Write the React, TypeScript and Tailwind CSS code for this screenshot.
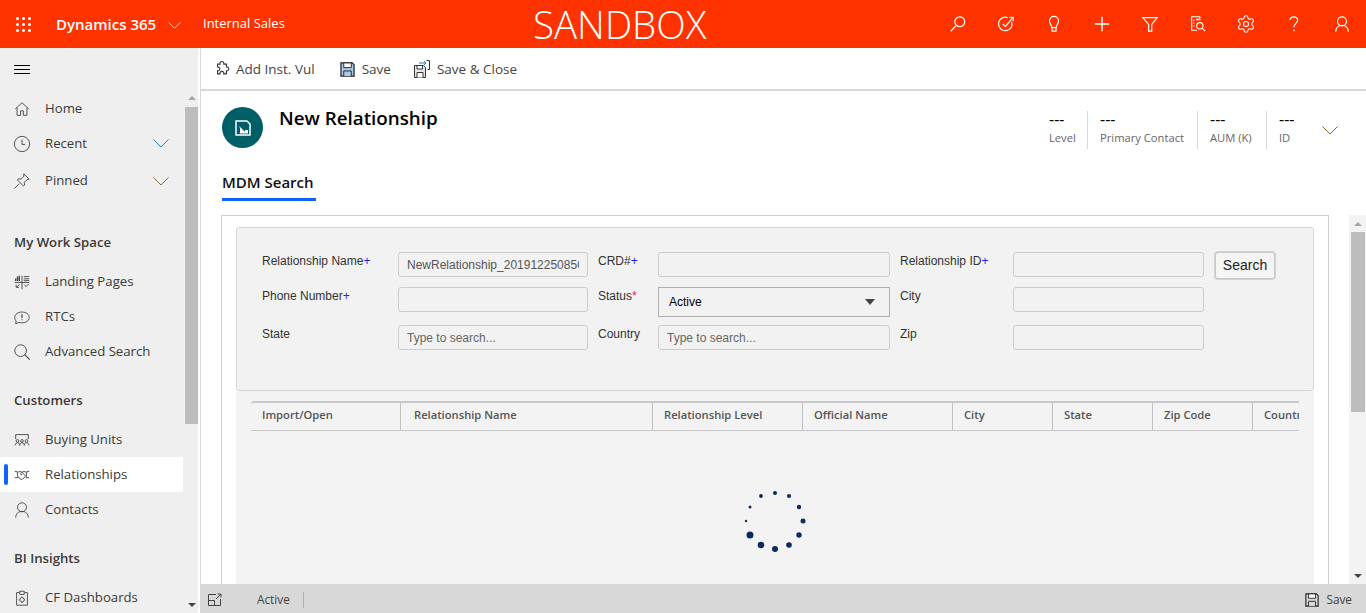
import React from 'react';
import { Settings } from 'lucide-react';

type IconProps = { className?: string };

const Svg = ({ className, children }: IconProps & { children: React.ReactNode }) => (
  <svg viewBox="0 0 20 20" fill="none" stroke="currentColor" strokeWidth="1" className={className}>
    {children}
  </svg>
);

const SearchGlyph = ({ className }: IconProps) => (
  <Svg className={className}><circle cx="12" cy="7.5" r="5.5" strokeWidth="1.3" /><path d="M8 11.5 2 18" strokeWidth="1.4" /></Svg>
);
const TaskGlyph = ({ className }: IconProps) => (
  <Svg className={className}>
    <path d="M16.3 7.5A7.5 7.5 0 1 1 12 3" strokeWidth="1.3" /><path d="m6.5 10 2.8 2.8L17.5 3" strokeWidth="1.3" /><path d="M13.5 2.5h4.5V7" strokeWidth="1.2" />
  </Svg>
);
const BulbGlyph = ({ className }: IconProps) => (
  <Svg className={className}>
    <path d="M7.5 14c0-3-2.500-4-2.500-7.500a5 5 0 0 1 10 0C15 10 12.500 11 12.500 14z" strokeWidth="1.3" /><path d="M7.800 14v4h4.400v-4" strokeWidth="1.3" />
  </Svg>
);
const PlusGlyph = ({ className }: IconProps) => (
  <Svg className={className}><path d="M10 2v16M2 10h16" strokeWidth="1.6" /></Svg>
);
const FilterGlyph = ({ className }: IconProps) => (
  <Svg className={className}><path d="M2 3h16l-6 7.500V18H8.500v-7.500z" strokeWidth="1.3" /></Svg>
);
const DocSearchGlyph = ({ className }: IconProps) => (
  <Svg className={className}>
    <path d="M9 17H3V2h9v4" strokeWidth="1.2" /><path d="M5 6h1M5 9h1M5 12h1M8 5h3" strokeWidth="1.5" /><circle cx="12" cy="12" r="3.500" strokeWidth="1.2" /><path d="m14.500 14.500 3.500 3.500" strokeWidth="1.3" />
  </Svg>
);
const HelpGlyph = ({ className }: IconProps) => (
  <Svg className={className}>
    <path d="M5.500 5.500C5.800 3.200 7.500 2 9.700 2c2.500 0 4.300 1.600 4.300 3.800 0 3.500-4 3.700-4 7.700" strokeWidth="1.3" /><path d="M10 16.500v1.500" strokeWidth="1.5" />
  </Svg>
);
const PersonGlyph = ({ className }: IconProps) => (
  <Svg className={className}>
    <circle cx="10" cy="7" r="5" strokeWidth="1.3" /><path d="M3 18.500c0-4 2.800-7 7-7s7 3 7 7" strokeWidth="1.3" />
  </Svg>
);
const Chevron = ({ className }: IconProps) => (
  <svg viewBox="0 0 16 9" fill="none" stroke="currentColor" strokeWidth="1" className={className}><path d="m.5.5 7.500 7.500L15.500.5" /></svg>
);
const HomeGlyph = ({ className }: IconProps) => (
  <Svg className={className}><path d="M2.500 10 10 3l7.500 7M4.500 8.500V17h4v-5h3v5h4V8.500" strokeWidth="1" /></Svg>
);
const ClockGlyph = ({ className }: IconProps) => (
  <Svg className={className}><circle cx="10" cy="10" r="8.500" /><path d="M10 5v5.500h3.500" /></Svg>
);
const PinGlyph = ({ className }: IconProps) => (
  <Svg className={className}><path d="m12 2 6 6-2.500.5-3 3 .5 3-1.500 1-6.500-6.500 1-1.500 3 .5 3-3zM7 13l-5.500 5.500" /></Svg>
);
const LandingGlyph = ({ className }: IconProps) => (
  <Svg className={className}>
    <path d="M2 10.500h16M10 3v15M12 4h6M12 6.500h6M12 8.500h6" /><path d="M3 9V6M5 9V4M7 9V3" strokeWidth="1.500" /><path d="m12.500 13 2 2 3-3M7 12.500l-2.500 3M3.500 13v3h3" />
  </Svg>
);
const RtcGlyph = ({ className }: IconProps) => (
  <Svg className={className}>
    <path d="M3.500 14.500C2.300 13.300 2 12 2 10.500 2 7 5.500 4.500 10 4.500s8 2.500 8 6-3.500 6-8 6c-1.200 0-2.300-.2-3.300-.5L3 17.500z" /><path d="M10 7v4M10 12.500v1.200" strokeWidth="1.300" />
  </Svg>
);
const MagnifyGlyph = ({ className }: IconProps) => (
  <Svg className={className}><circle cx="8.500" cy="8.500" r="6.500" /><path d="m13 13 5.500 5.500" strokeWidth="1.200" /></Svg>
);
const BuyingGlyph = ({ className }: IconProps) => (
  <Svg className={className}>
    <path d="M3 9V4h14v5" /><circle cx="5" cy="11" r="1.500" /><circle cx="10" cy="11" r="1.500" /><circle cx="15" cy="11" r="1.500" /><path d="M2.500 16c0-2 1-3 2.500-3s2.500 1 2.500 3M7.500 16c0-2 1-3 2.500-3s2.500 1 2.500 3M12.500 16c0-2 1-3 2.500-3s2.500 1 2.500 3" />
  </Svg>
);
const HandshakeGlyph = ({ className }: IconProps) => (
  <Svg className={className}>
    <path d="M2 6h2.500l1 7H2M18 6h-2.500l-1 7H18M5 7l3-1 2 1 2-1 3 1M5.500 12l3.500 3 1.500-.5 3-2.500M8 8.500l2.500-1.500 3.500 4.500M8 8.500l2 1.500" />
  </Svg>
);
const ContactGlyph = ({ className }: IconProps) => (
  <Svg className={className}><circle cx="10" cy="7" r="5" /><path d="M3 18.500c0-4 2.800-7 7-7s7 3 7 7" /></Svg>
);
const ClipGlyph = ({ className }: IconProps) => (
  <Svg className={className}>
    <path d="M7 4H4v14h12V4h-3M7.500 2.500h5V6h-5z" /><circle cx="10" cy="12" r="2.500" /><path d="M10 8.500v1M10 14.500v1M6.500 12h1M12.500 12h1" />
  </Svg>
);
const PuzzleGlyph = ({ className }: IconProps) => (
  <svg viewBox="0 0 18 18" fill="none" stroke="#333" strokeWidth="1.200" className={className}>
    <path d="M4 3.500h2.800a2.200 2.200 0 1 1 4.200 0h3v3.200a2.200 2.200 0 1 1 0 4.300v3.500h-3a2.200 2.200 0 1 0-4.200 0H4V11a2.200 2.200 0 1 0 0-4.300z" />
  </svg>
);
const FloppyGlyph = ({ className, fill = '#a9cbe8' }: IconProps & { fill?: string }) => (
  <svg viewBox="0 0 16 16" className={className}>
    <path d="M1 1h12l2 2v12H1z" fill={fill} stroke="#222" strokeWidth="1.300" />
    <path d="M4 1h8v5H4z" fill="#fff" stroke="#222" />
    <path d="M4 15V9.500h8V15" fill={fill} stroke="#222" />
  </svg>
);
const SaveCloseGlyph = ({ className }: IconProps) => (
  <svg viewBox="0 0 17 18" fill="none" className={className}>
    <path d="M1.500 5.500h9l2 2v10h-11z" fill="#e8e8e8" stroke="#333" />
    <path d="M4 5.500h5.500V9H4zM4 17.500v-5h6v5" fill="#fff" stroke="#333" />
    <path d="M6 3h7M11 1l2 2-2 2" stroke="#2a78c6" />
    <path d="M13.500.5h3v9h-2" stroke="#333" />
  </svg>
);
const PopoutGlyph = ({ className }: IconProps) => (
  <svg viewBox="0 0 14 13" fill="none" stroke="#444" className={className}>
    <path d="M8 1.500H.5v11h12V6M.5 7.500h6v5M8 6l4.500-4.500M9.500 1h3.500v3.500" />
  </svg>
);

const Waffle = () => (
  <div className="grid grid-cols-3 gap-[3px] w-[15px]">
    {Array.from({ length: 9 }).map((_, i) => (
      <span key={i} className="w-[3px] h-[3px] rounded-full bg-white" />
    ))}
  </div>
);

const TopBar = () => {
  const icons = [SearchGlyph, TaskGlyph, BulbGlyph, PlusGlyph, FilterGlyph, DocSearchGlyph, null, HelpGlyph, PersonGlyph];
  return (
    <div className="h-12 bg-[#ff3300] text-white flex items-center shrink-0">
      <div className="w-[56px] pl-4"><Waffle /></div>
      <span className="text-[15px] font-semibold w-[112px]">Dynamics 365</span>
      <Chevron className="w-[13px] h-[7px] mt-[2px] text-white" />
      <span className="ml-[22px] text-[13px] w-[330px]">Internal Sales</span>
      <span className="text-[38.5px] leading-[48px] font-light">SANDBOX</span>
      <div className="ml-auto flex">
        {icons.map((Icon, i) => (
          <div key={i} className="w-12 h-12 flex items-center justify-center">
            {Icon ? <Icon className="w-[18px] h-[18px]" /> : <Settings className="w-5 h-5" strokeWidth={1.3} />}
          </div>
        ))}
      </div>
    </div>
  );
};

const NavRow = ({ icon: Icon, label, active, chevron, className }: {
  icon: React.ComponentType<IconProps>;
  label: string;
  active?: boolean;
  chevron?: string;
  className?: string;
}) => (
  <div className={`relative h-[35px] flex items-center pl-[13px] text-[13.2px] text-[#3b3a39] ${active ? 'bg-white' : ''} ${className ?? ''}`}>
    {active && <span className="absolute left-1 top-[7px] w-1 h-[21px] rounded-full bg-[#0f62fe]" />}
    <Icon className="w-[18px] h-[18px] mr-[14px] text-[#444]" />
    <span>{label}</span>
    {chevron && <Chevron className={`w-4 h-[9px] ml-auto mr-[14px] ${chevron}`} />}
  </div>
);

const NavHeading = ({ label, className }: { label: string; className: string }) => (
  <div className={`h-[35px] flex items-center pl-[14px] text-[13.2px] font-semibold text-[#3b3a39] ${className}`}>{label}</div>
);

const Sidebar = () => (
  <div className="w-[200px] shrink-0 flex bg-white">
    <div className="w-[183px] bg-[#efefef] overflow-hidden">
      <div className="h-[42px] flex items-center pl-[14px]">
        <div className="w-4 flex flex-col gap-[3px]">
          <span className="h-px bg-black" /><span className="h-px bg-black" /><span className="h-px bg-black" />
        </div>
      </div>
      <NavRow icon={HomeGlyph} label="Home" className="h-[36px] pt-[1px]" />
      <NavRow icon={ClockGlyph} label="Recent" chevron="text-[#3b7fc4]" />
      <NavRow icon={PinGlyph} label="Pinned" chevron="text-[#8a6f3a]" className="h-[38px] pt-[2px]" />
      <NavHeading label="My Work Space" className="mt-[26px]" />
      <NavRow icon={LandingGlyph} label="Landing Pages" className="mt-1" />
      <NavRow icon={RtcGlyph} label="RTCs" />
      <NavRow icon={MagnifyGlyph} label="Advanced Search" />
      <NavHeading label="Customers" className="mt-[14px]" />
      <NavRow icon={BuyingGlyph} label="Buying Units" className="mt-1" />
      <NavRow icon={HandshakeGlyph} label="Relationships" active />
      <NavRow icon={ContactGlyph} label="Contacts" />
      <NavHeading label="BI Insights" className="mt-[14px]" />
      <NavRow icon={ClipGlyph} label="CF Dashboards" className="mt-1" />
    </div>
    <div className="w-[15px] bg-[#efefef] flex flex-col items-end">
      <div className="w-[13px] h-[59px] pt-[48px]"><div className="mx-auto w-0 h-0 border-x-[4px] border-x-transparent border-b-[4px] border-b-[#a6a6a6]" /></div>
      <div className="w-[13px] h-[317px] bg-[#bdbdbd]" />
      <div className="w-[13px] mt-auto mb-[6px] flex justify-center"><div className="w-0 h-0 border-x-[4px] border-x-transparent border-t-[4px] border-t-[#444]" /></div>
    </div>
  </div>
);

const Toolbar = () => (
  <div className="h-[41px] flex items-center pl-[13px] pt-[1px] text-[13.5px] text-[#444] shrink-0">
    <PuzzleGlyph className="w-[16px] h-[16px] mr-[6px]" />
    <span>Add Inst. Vul</span>
    <FloppyGlyph className="w-[15px] h-[15px] ml-[25px] mr-[7px]" />
    <span>Save</span>
    <SaveCloseGlyph className="w-[17px] h-[18px] ml-[22px] mr-[7px]" />
    <span>Save &amp; Close</span>
  </div>
);

const Stat = ({ label, width, divider }: { label: string; width: string; divider?: boolean }) => (
  <div className={`${width} h-[38px] pl-3 ${divider ? 'border-r border-[#d8d8d8]' : ''}`}>
    <div className="text-[16px] leading-[16px] text-black h-[18px]">---</div>
    <div className="text-[11.2px] leading-[18px] text-[#666]">{label}</div>
  </div>
);

const RecordHeader = () => (
  <div className="h-[126px] pl-[21px] pr-[28px] shrink-0 border-t-2 border-[#d8d8d8]">
    <div className="flex pt-4">
      <div className="w-[41px] h-[41px] rounded-full bg-[#005e66] flex items-center justify-center">
        <svg viewBox="0 0 16 16" fill="none" className="w-[16px] h-[16px]">
          <path d="M1 1h11l3 3v11H1z" stroke="#fff" strokeWidth="1.500" />
          <path d="M3.500 4.500 9 10h4v3.500H5V8" fill="#fff" />
          <path d="M3.500 4.500 10 11" stroke="#005e66" strokeWidth="1.200" />
        </svg>
      </div>
      <h1 className="ml-[16px] text-[18.8px] leading-[23px] font-semibold text-black">New Relationship</h1>
      <div className="ml-auto flex items-start pt-[4px]">
        <Stat label="Level" width="w-[51px]" divider />
        <Stat label="Primary Contact" width="w-[110px]" divider />
        <Stat label="AUM (K)" width="w-[69px]" divider />
        <Stat label="ID" width="w-[55px]" />
        <Chevron className="w-4 h-[9px] mt-[15px] text-[#8a6a20]" />
      </div>
    </div>
    <div className="mt-[23px] inline-flex flex-col">
      <span className="text-[15px] leading-[20px] font-semibold text-[#111]">MDM Search</span>
      <span className="mt-[6px] h-[3px] w-[94px] bg-[#0f62fe]" />
    </div>
  </div>
);

const Label = ({ text, mark }: { text: string; mark?: '+' | '*' }) => (
  <span className="text-[12px] leading-[18px] text-[#333] font-['Liberation_Sans',Arial,sans-serif]">
    {text}
    {mark === '+' && <span className="text-[#2222ee]">+</span>}
    {mark === '*' && <span className="text-[#e0245e]">*</span>}
  </span>
);

const Field = ({ value, placeholder, width }: { value?: string; placeholder?: string; width: string }) => (
  <input
    readOnly
    value={value ?? ''}
    placeholder={placeholder}
    className={`${width} h-[25px] px-2 border border-[#cccccc] rounded-[3px] bg-[#f2f2f2] text-[12px] text-[#555] placeholder:text-[#666] outline-none font-['Liberation_Sans',Arial,sans-serif]`}
  />
);

const SearchForm = () => (
  <div className="h-[164px] mx-[14px] mt-[11px] bg-[#f2f2f2] border border-[#d6d6d6] rounded-[3px] pl-[25px] pt-[24px]">
    <div className="flex items-start h-[35px]">
      <div className="w-[136px] -mt-[5px]"><Label text="Relationship Name" mark="+" /></div>
      <Field value="NewRelationship_20191225085012" width="w-[190px]" />
      <div className="w-[60px] ml-[10px] -mt-[5px]"><Label text="CRD#" mark="+" /></div>
      <Field width="w-[232px]" />
      <div className="w-[113px] ml-[10px] -mt-[5px]"><Label text="Relationship ID" mark="+" /></div>
      <Field width="w-[191px]" />
      <button className="ml-[11px] w-[60px] h-[27px] bg-[#f5f5f5] border border-[#c8c8c8] ring-1 ring-[#d4d4d4] rounded-[3px] text-[14px] text-[#222] font-['Liberation_Sans',Arial,sans-serif]">Search</button>
    </div>
    <div className="flex items-start h-[38px]">
      <div className="w-[136px] -mt-[5px]"><Label text="Phone Number" mark="+" /></div>
      <Field width="w-[190px]" />
      <div className="w-[60px] ml-[10px] -mt-[5px]"><Label text="Status" mark="*" /></div>
      <div className="w-[232px] h-[30px] pl-[10px] pr-[14px] flex items-center justify-between border border-[#b0b0b0] bg-[#f2f2f2] text-[12px] text-black font-['Liberation_Sans',Arial,sans-serif]">
        <span>Active</span>
        <span className="w-0 h-0 border-x-[5px] border-x-transparent border-t-[6px] border-t-[#444]" />
      </div>
      <div className="w-[113px] ml-[10px] -mt-[5px]"><Label text="City" /></div>
      <Field width="w-[191px]" />
    </div>
    <div className="flex items-start h-[35px]">
      <div className="w-[136px] -mt-[5px]"><Label text="State" /></div>
      <Field placeholder="Type to search..." width="w-[190px]" />
      <div className="w-[60px] ml-[10px] -mt-[5px]"><Label text="Country" /></div>
      <Field placeholder="Type to search..." width="w-[232px]" />
      <div className="w-[113px] ml-[10px] -mt-[5px]"><Label text="Zip" /></div>
      <Field width="w-[191px]" />
    </div>
  </div>
);

const columns = [
  { label: 'Import/Open', w: 'w-[150px]', pad: 'pl-[11px]' },
  { label: 'Relationship Name', w: 'w-[252px]', pad: 'pl-[13px]' },
  { label: 'Relationship Level', w: 'w-[150px]', pad: 'pl-[11px]' },
  { label: 'Official Name', w: 'w-[150px]', pad: 'pl-[11px]' },
  { label: 'City', w: 'w-[100px]', pad: 'pl-[11px]' },
  { label: 'State', w: 'w-[100px]', pad: 'pl-[11px]' },
  { label: 'Zip Code', w: 'w-[100px]', pad: 'pl-[11px]' },
  { label: 'Country', w: 'w-[100px]', pad: 'pl-[11px]' },
];

const spinnerDots = [
  [75, 23, 2], [89, 26, 2.1], [99, 37, 2.2], [103, 51, 2.500], [99, 65, 2.700], [89, 75, 2.800],
  [75, 79, 3], [61, 75, 3.300], [50, 65, 3.500], [46, 51, 1.200], [50, 37, 1.500], [61, 26, 1.900],
];

const Spinner = () => (
  <svg viewBox="0 0 150 100" className="w-[150px] h-[100px]">
    {spinnerDots.map(([cx, cy, r], i) => (
      <circle key={i} cx={cx} cy={cy} r={r} fill="#0b2a5e" />
    ))}
  </svg>
);

const Grid = () => (
  <div className="flex-1 bg-[#f3f3f3] mx-[14px] px-[15px] pt-[10px] overflow-hidden">
    <div className="w-[1048px] overflow-hidden h-[30px] flex border-t-2 border-b border-[#c8c8c8] rounded-tl-[3px] text-[11.2px] font-semibold text-[#555]">
      {columns.map((c, i) => (
        <div key={c.label} className={`${c.w} ${c.pad} shrink-0 flex items-center pb-[2px] whitespace-nowrap ${i < columns.length - 1 ? 'border-r border-[#c0c0c0]' : ''}`}>
          {c.label}
        </div>
      ))}
    </div>
    <div className="flex justify-center pt-[39px]">
      <Spinner />
    </div>
  </div>
);

const Scrollbar = () => (
  <div className="w-[17px] shrink-0 bg-[#f3f3f3] flex flex-col items-center">
    <div className="h-[17px] flex items-center justify-center"><div className="w-0 h-0 border-x-[4px] border-x-transparent border-b-[4px] border-b-[#a6a6a6]" /></div>
    <div className="w-[14px] h-[180px] bg-[#bdbdbd]" />
    <div className="mt-auto h-[17px] flex items-center justify-center"><div className="w-0 h-0 border-x-[4px] border-x-transparent border-t-[4px] border-t-[#444]" /></div>
  </div>
);

const StatusBar = () => (
  <div className="h-[29px] pt-[2px] bg-[#d8d8d8] flex items-center text-[11.8px] text-[#444] shrink-0">
    <PopoutGlyph className="ml-[7px] w-[14px] h-[13px]" />
    <span className="ml-[35px]">Active</span>
    <span className="ml-[13px] w-px h-4 bg-[#b0b0b0]" />
    <FloppyGlyph className="ml-auto w-[14px] h-[14px]" fill="#d8d8d8" />
    <span className="ml-[7px] mr-[14px]">Save</span>
  </div>
);

export default function App() {
  return (
    <div className="w-[1366px] h-[613px] flex flex-col overflow-hidden bg-white font-['Open_Sans',sans-serif]">
      <TopBar />
      <div className="flex-1 flex min-h-0">
        <Sidebar />
        <div className="flex-1 flex flex-col min-w-0 border-l border-[#d8d8d8]">
          <Toolbar />
          <RecordHeader />
          <div className="flex-1 flex min-h-0">
            <div className="w-[1108px] ml-5 border border-[#cfcfcf] border-b-0 flex flex-col overflow-hidden">
              <SearchForm />
              <Grid />
            </div>
            <div className="ml-auto flex"><Scrollbar /></div>
          </div>
          <StatusBar />
        </div>
      </div>
    </div>
  );
}
